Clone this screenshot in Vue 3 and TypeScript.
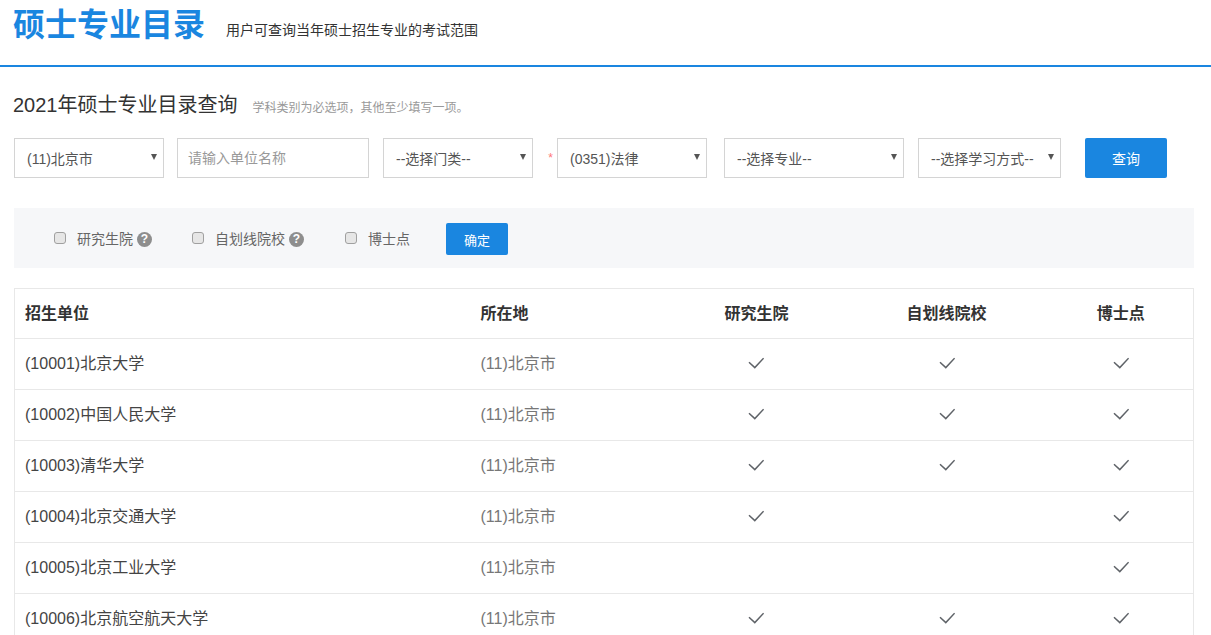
<script setup lang="ts">
interface Row { name: string; a: boolean; b: boolean; c: boolean }
const rows: Row[] = [
  { name: '(10001)北京大学', a: true, b: true, c: true },
  { name: '(10002)中国人民大学', a: true, b: true, c: true },
  { name: '(10003)清华大学', a: true, b: true, c: true },
  { name: '(10004)北京交通大学', a: true, b: false, c: true },
  { name: '(10005)北京工业大学', a: false, b: false, c: true },
  { name: '(10006)北京航空航天大学', a: true, b: true, c: true },
]
</script>

<template>
  <div class="page">
    <header class="head">
      <h1 class="logo">硕士专业目录</h1>
      <span class="sub">用户可查询当年硕士招生专业的考试范围</span>
    </header>

    <section class="main">
      <div class="title-line">
        <h2 class="title">2021年硕士专业目录查询</h2>
        <span class="hint">学科类别为必选项，其他至少填写一项。</span>
      </div>

      <form class="query" @submit.prevent>
        <div class="sel w150"><select><option>(11)北京市</option></select></div>
        <input class="unit" type="text" placeholder="请输入单位名称" />
        <div class="sel w150 ml14"><select><option>--选择门类--</option></select></div>
        <span class="star">*</span>
        <div class="sel w150"><select><option>(0351)法律</option></select></div>
        <div class="sel w180 ml17"><select><option>--选择专业--</option></select></div>
        <div class="sel w143 ml14"><select><option>--选择学习方式--</option></select></div>
        <button class="btn btn-query" type="button">查询</button>
      </form>

      <div class="filters">
        <label class="chk c1"><input type="checkbox" /><span>研究生院</span><i class="help">?</i></label>
        <label class="chk c2"><input type="checkbox" /><span>自划线院校</span><i class="help">?</i></label>
        <label class="chk c3"><input type="checkbox" /><span>博士点</span></label>
        <button class="btn btn-ok" type="button">确定</button>
      </div>

      <table class="tbl">
        <colgroup>
          <col class="k1" /><col class="k2" /><col class="k3" /><col class="k4" /><col class="k5" />
        </colgroup>
        <thead>
          <tr>
            <th>招生单位</th>
            <th>所在地</th>
            <th class="ct h3">研究生院</th>
            <th class="ct">自划线院校</th>
            <th class="ct">博士点</th>
          </tr>
        </thead>
        <tbody>
          <tr v-for="r in rows" :key="r.name">
            <td class="nm">{{ r.name }}</td>
            <td class="loc">(11)北京市</td>
            <td v-for="(v, i) in [r.a, r.b, r.c]" :key="i" class="ct">
              <svg v-if="v" class="tick" viewBox="0 0 16 12" width="16" height="12">
                <path d="M1 5.2 L6.8 10.6 L15.6 1.2" fill="none" stroke="#5f6368" stroke-width="1.5" />
              </svg>
            </td>
          </tr>
        </tbody>
      </table>
    </section>
  </div>
</template>

<style>
html, body { margin: 0; overflow: hidden; background: #fff; }
</style>

<style scoped>
.page {
  width: 1211px;
  height: 635px;
  overflow: hidden;
  font-family: "Liberation Sans", "Noto Sans CJK SC", sans-serif;
  font-size: 14px;
  color: #333;
}
.head {
  height: 65px;
  border-bottom: 2px solid #1a86e0;
  padding-left: 13px;
  display: flex;
  align-items: flex-start;
  box-sizing: content-box;
}
.logo {
  margin: 6px 0 0;
  font-size: 32px;
  line-height: 38px;
  font-weight: 700;
  color: #1a86e0;
}
.sub {
  margin: 20px 0 0 21px;
  line-height: 20px;
  color: #333;
}
.main { padding: 0 17px 0 14px; }
.title-line {
  display: flex;
  align-items: baseline;
  padding-top: 24px;
  height: 47px;
  box-sizing: content-box;
}
.title { margin: 0 0 0 -1px; font-size: 20px; line-height: 28px; font-weight: 400; color: #333; }
.hint { margin-left: 15px; font-size: 12px; color: #999; }
.query { display: flex; align-items: center; height: 40px; margin-top: 0; }
.sel { position: relative; height: 40px; flex: none; }
.sel::after {
  content: "";
  position: absolute;
  right: 7px;
  top: 16px;
  border-left: 3.5px solid transparent;
  border-right: 3.5px solid transparent;
  border-top: 6px solid #555;
  pointer-events: none;
}
.sel select {
  appearance: none;
  width: 100%;
  height: 100%;
  border: 1px solid #d4d4d4;
  background: #fff;
  padding: 1px 0 0 12px;
  font: inherit;
  color: #555;
  border-radius: 0;
  outline: none;
}
.w150 { width: 150px; }
.w180 { width: 180px; }
.w143 { width: 143px; }
.ml14 { margin-left: 14px; }
.ml17 { margin-left: 17px; }
.unit {
  width: 192px;
  height: 40px;
  box-sizing: border-box;
  margin-left: 13px;
  border: 1px solid #d4d4d4;
  padding: 0 10px;
  font: inherit;
  color: #555;
  outline: none;
  border-radius: 0;
}
.unit::placeholder { color: #999; opacity: 1; }
.star {
  width: 24px;
  box-sizing: border-box;
  padding-right: 4px;
  text-align: right;
  color: #f77;
  font-size: 12px;
}
.btn {
  border: 0;
  border-radius: 2px;
  background: #1a86e0;
  color: #fff;
  font: inherit;
  padding: 0;
}
.btn-query { width: 82px; height: 40px; margin-left: 24px; }
.btn-ok { width: 62px; height: 32px; font-size: 13px; margin-left: 36px; }
.filters {
  display: flex;
  align-items: center;
  height: 60px;
  margin-top: 30px;
  width: 1180px;
  background: #f6f7f9;
  padding: 2px 0 0 40px;
  box-sizing: border-box;
}
.chk { display: flex; align-items: center; color: #666; line-height: 20px; }
.chk input {
  appearance: none;
  width: 12px;
  height: 12px;
  margin: 0 11px 0 0;
  box-sizing: border-box;
  border: 1px solid #a0a0a0;
  border-radius: 3px;
  background: #e6e6e6;
  position: relative;
  top: -1px;
}
.c2 { margin-left: 40px; }
.c3 { margin-left: 41px; }
.help {
  display: block;
  width: 15px;
  height: 15px;
  margin-left: 4px;
  border-radius: 50%;
  background: #8e8e8e;
  color: #fff;
  font-style: normal;
  font-weight: 700;
  font-size: 12px;
  line-height: 15px;
  text-align: center;
}
.tbl {
  width: 1179px;
  margin-top: 20px;
  border-collapse: collapse;
  table-layout: fixed;
  border: 1px solid #e8e8e8;
}
.k1 { width: 456px; }
.k2 { width: 196px; }
.k3 { width: 178px; }
.k4 { width: 204px; }
.k5 { width: 145px; }
.tbl th {
  height: 50px;
  padding: 0 10px 4px;
  box-sizing: border-box;
  text-align: left;
  font-size: 16px;
  font-weight: 700;
  color: #333;
  border-bottom: 1px solid #e8e8e8;
}
.tbl td {
  height: 51px;
  padding: 0 10px 4px;
  box-sizing: border-box;
  font-size: 16px;
  border-bottom: 1px solid #e8e8e8;
}
.tbl th.ct { text-align: center; }
.tbl th.h3 { padding-left: 12px; }
.tbl td.ct { text-align: center; padding-bottom: 0; }
.nm { color: #444; }
.loc { color: #777; }
.tick { display: block; margin: -3px auto 0; }
</style>
